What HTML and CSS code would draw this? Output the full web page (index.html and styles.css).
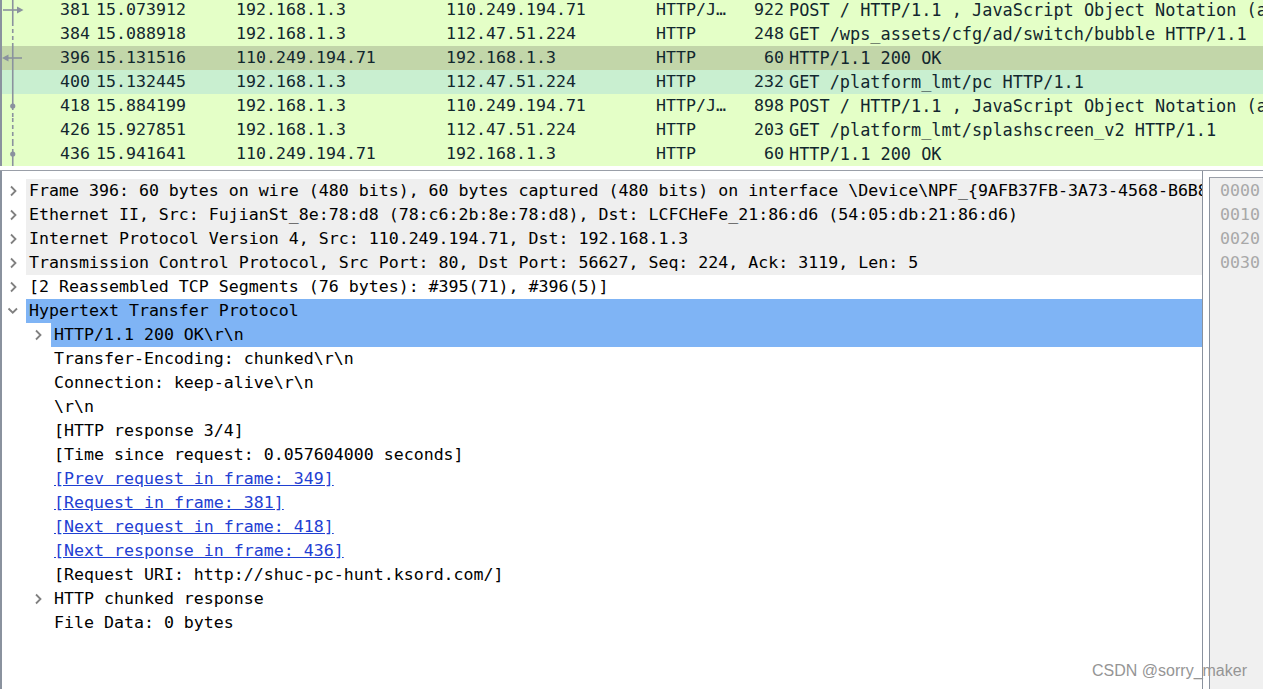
FILE: index.html
```html
<!DOCTYPE html>
<html>
<head>
<meta charset="utf-8">
<title>Wireshark</title>
<link rel="stylesheet" href="styles.css">
</head>
<body>
<div class="app">
  <div class="plist">
    <div class="prow">
      <span class="rel"><svg width="24" height="24" viewBox="0 0 24 24"><line x1="10.75" y1="0" x2="10.75" y2="24" class="ln"/><line x1="1" y1="12" x2="16" y2="12" class="ln"/><polygon points="15,8.5 21.5,12 15,15.5" class="fl"/></svg></span>
      <span class="c-no">381</span><span class="c-time">15.073912</span><span class="c-src">192.168.1.3</span><span class="c-dst">110.249.194.71</span><span class="c-proto">HTTP/J…</span><span class="c-len">922</span><span class="c-info">POST / HTTP/1.1 , JavaScript Object Notation (application/json)</span>
    </div>
    <div class="prow">
      <span class="rel"><svg width="24" height="24" viewBox="0 0 24 24"><line x1="10.75" y1="0" x2="10.75" y2="24" class="ln dash"/></svg></span>
      <span class="c-no">384</span><span class="c-time">15.088918</span><span class="c-src">192.168.1.3</span><span class="c-dst">112.47.51.224</span><span class="c-proto">HTTP</span><span class="c-len">248</span><span class="c-info">GET /wps_assets/cfg/ad/switch/bubble HTTP/1.1</span>
    </div>
    <div class="prow selected">
      <span class="rel"><svg width="24" height="24" viewBox="0 0 24 24"><line x1="10.75" y1="0" x2="10.75" y2="24" class="ln"/><line x1="5" y1="12" x2="20" y2="12" class="ln"/><polygon points="6.5,8.5 0,12 6.5,15.5" class="fl"/></svg></span>
      <span class="c-no">396</span><span class="c-time">15.131516</span><span class="c-src">110.249.194.71</span><span class="c-dst">192.168.1.3</span><span class="c-proto">HTTP</span><span class="c-len">60</span><span class="c-info">HTTP/1.1 200 OK</span>
    </div>
    <div class="prow related">
      <span class="rel"><svg width="24" height="24" viewBox="0 0 24 24"><line x1="10.75" y1="0" x2="10.75" y2="24" class="ln"/></svg></span>
      <span class="c-no">400</span><span class="c-time">15.132445</span><span class="c-src">192.168.1.3</span><span class="c-dst">112.47.51.224</span><span class="c-proto">HTTP</span><span class="c-len">232</span><span class="c-info">GET /platform_lmt/pc HTTP/1.1</span>
    </div>
    <div class="prow">
      <span class="rel"><svg width="24" height="24" viewBox="0 0 24 24"><line x1="10.75" y1="0" x2="10.75" y2="12" class="ln"/><line x1="10.75" y1="12" x2="10.75" y2="24" class="ln dash"/><circle cx="10.75" cy="12" r="2.6" class="fl"/></svg></span>
      <span class="c-no">418</span><span class="c-time">15.884199</span><span class="c-src">192.168.1.3</span><span class="c-dst">110.249.194.71</span><span class="c-proto">HTTP/J…</span><span class="c-len">898</span><span class="c-info">POST / HTTP/1.1 , JavaScript Object Notation (application/json)</span>
    </div>
    <div class="prow">
      <span class="rel"><svg width="24" height="24" viewBox="0 0 24 24"><line x1="10.75" y1="0" x2="10.75" y2="24" class="ln dash"/></svg></span>
      <span class="c-no">426</span><span class="c-time">15.927851</span><span class="c-src">192.168.1.3</span><span class="c-dst">112.47.51.224</span><span class="c-proto">HTTP</span><span class="c-len">203</span><span class="c-info">GET /platform_lmt/splashscreen_v2 HTTP/1.1</span>
    </div>
    <div class="prow">
      <span class="rel"><svg width="24" height="24" viewBox="0 0 24 24"><line x1="10.75" y1="0" x2="10.75" y2="12" class="ln dash"/><line x1="10.75" y1="12" x2="10.75" y2="24" class="ln"/><circle cx="10.75" cy="12" r="2.6" class="fl"/></svg></span>
      <span class="c-no">436</span><span class="c-time">15.941641</span><span class="c-src">110.249.194.71</span><span class="c-dst">192.168.1.3</span><span class="c-proto">HTTP</span><span class="c-len">60</span><span class="c-info">HTTP/1.1 200 OK</span>
    </div>
  </div>
  <div class="split"></div>
  <div class="bottom">
    <div class="tree">
      <div class="trow gray"><span class="tw"><svg width="24" height="24" viewBox="0 0 24 24"><path d="M9 7.5 L13.5 12 L9 16.5" class="chev"/></svg></span><span class="lbl">Frame 396: 60 bytes on wire (480 bits), 60 bytes captured (480 bits) on interface \Device\NPF_{9AFB37FB-3A73-4568-B6B8</span></div>
      <div class="trow gray"><span class="tw"><svg width="24" height="24" viewBox="0 0 24 24"><path d="M9 7.5 L13.5 12 L9 16.5" class="chev"/></svg></span><span class="lbl">Ethernet II, Src: FujianSt_8e:78:d8 (78:c6:2b:8e:78:d8), Dst: LCFCHeFe_21:86:d6 (54:05:db:21:86:d6)</span></div>
      <div class="trow gray"><span class="tw"><svg width="24" height="24" viewBox="0 0 24 24"><path d="M9 7.5 L13.5 12 L9 16.5" class="chev"/></svg></span><span class="lbl">Internet Protocol Version 4, Src: 110.249.194.71, Dst: 192.168.1.3</span></div>
      <div class="trow gray"><span class="tw"><svg width="24" height="24" viewBox="0 0 24 24"><path d="M9 7.5 L13.5 12 L9 16.5" class="chev"/></svg></span><span class="lbl">Transmission Control Protocol, Src Port: 80, Dst Port: 56627, Seq: 224, Ack: 3119, Len: 5</span></div>
      <div class="trow"><span class="tw"><svg width="24" height="24" viewBox="0 0 24 24"><path d="M9 7.5 L13.5 12 L9 16.5" class="chev"/></svg></span><span class="lbl">[2 Reassembled TCP Segments (76 bytes): #395(71), #396(5)]</span></div>
      <div class="trow sel"><span class="tw"><svg width="24" height="24" viewBox="0 0 24 24"><path d="M6.5 9.5 L10.75 13.75 L15 9.5" class="chev"/></svg></span><span class="lbl">Hypertext Transfer Protocol</span></div>
      <div class="trow l1 sel"><span class="tw"><svg width="24" height="24" viewBox="0 0 24 24"><path d="M9 7.5 L13.5 12 L9 16.5" class="chev"/></svg></span><span class="lbl">HTTP/1.1 200 OK\r\n</span></div>
      <div class="trow l1"><span class="tw"></span><span class="lbl">Transfer-Encoding: chunked\r\n</span></div>
      <div class="trow l1"><span class="tw"></span><span class="lbl">Connection: keep-alive\r\n</span></div>
      <div class="trow l1"><span class="tw"></span><span class="lbl">\r\n</span></div>
      <div class="trow l1"><span class="tw"></span><span class="lbl">[HTTP response 3/4]</span></div>
      <div class="trow l1"><span class="tw"></span><span class="lbl">[Time since request: 0.057604000 seconds]</span></div>
      <div class="trow l1"><span class="tw"></span><span class="lbl"><a class="lnk">[Prev request in frame: 349]</a></span></div>
      <div class="trow l1"><span class="tw"></span><span class="lbl"><a class="lnk">[Request in frame: 381]</a></span></div>
      <div class="trow l1"><span class="tw"></span><span class="lbl"><a class="lnk">[Next request in frame: 418]</a></span></div>
      <div class="trow l1"><span class="tw"></span><span class="lbl"><a class="lnk">[Next response in frame: 436]</a></span></div>
      <div class="trow l1"><span class="tw"></span><span class="lbl">[Request URI: http://shuc-pc-hunt.ksord.com/]</span></div>
      <div class="trow l1"><span class="tw"><svg width="24" height="24" viewBox="0 0 24 24"><path d="M9 7.5 L13.5 12 L9 16.5" class="chev"/></svg></span><span class="lbl">HTTP chunked response</span></div>
      <div class="trow l1"><span class="tw"></span><span class="lbl">File Data: 0 bytes</span></div>
    </div>
    <div class="bytes">
      <div class="brow">0000</div>
      <div class="brow">0010</div>
      <div class="brow">0020</div>
      <div class="brow">0030</div>
    </div>
  </div>
  <div class="wm">CSDN @sorry_maker</div>
</div>
</body>
</html>
```

FILE: styles.css
```css
html, body {
  margin: 0;
  padding: 0;
  background: #ffffff;
  overflow: hidden;
}

body {
  font-family: "DejaVu Sans Mono", "Liberation Mono", monospace;
  font-size: 16.6px;
  color: #000000;
}

.app {
  position: relative;
  height: 689px;
  display: flex;
  flex-direction: column;
  overflow: hidden;
}

/* ---------- packet list ---------- */
.plist {
  flex: none;
  margin-top: -2px;
  border-left: 2px solid #8a929e;
}

.prow {
  display: grid;
  grid-template-columns: 24px 64px 146px 210px 210px 84px 44px minmax(0, 1fr);
  height: 24px;
  line-height: 24px;
  background: #e4ffc7;
  color: #12272e;
  white-space: nowrap;
}

.prow.selected { background: #c2d6a9; }
.prow.related { background: #c9efd0; }

.prow > span { overflow: hidden; }

.prow .c-info { font-size: 16.9px; }

.rel svg { display: block; }

.ln {
  stroke: #8a929e;
  stroke-width: 1.6;
  fill: none;
}

.ln.dash { stroke-dasharray: 4 3; }

.fl { fill: #8a929e; }

.c-no, .c-len { text-align: right; }
.c-time { padding-left: 6px; }
.c-info { padding-left: 5px; }

.split {
  flex: none;
  height: 4px;
  border-bottom: 1px solid #9a9fa8;
}

/* ---------- bottom panes ---------- */
.bottom {
  flex: 1;
  min-height: 0;
  display: flex;
}

.tree {
  flex: none;
  width: 1203px;
  box-sizing: border-box;
  border-left: 2px solid #8a929e;
  border-right: 1px solid #8a929e;
  padding-top: 8px;
  overflow: hidden;
}

.trow {
  display: flex;
  height: 24px;
  line-height: 24px;
  white-space: nowrap;
}

.trow.l1 { padding-left: 25px; }

.tw {
  flex: none;
  width: 24px;
  height: 24px;
}

.tw svg { display: block; }

.chev {
  fill: none;
  stroke: #808080;
  stroke-width: 1.8;
}

.lbl {
  flex: 1;
  min-width: 0;
  overflow: hidden;
  padding-left: 3px;
}

.trow.gray .lbl { background: #efefef; }
.trow.sel .lbl { background: #7fb4f5; }

.lnk {
  color: #1f40d2;
  text-decoration: underline;
}

.bytes {
  flex: 1;
  margin-left: 6px;
  margin-top: 6px;
  padding-top: 1px;
  border-left: 1px solid #8a929e;
  border-top: 1px solid #9a9fa8;
  background: #f0f0f0;
  color: #a8a8a8;
  padding-left: 10px;
}

.brow {
  height: 24px;
  line-height: 24px;
}

/* watermark */
.wm {
  position: absolute;
  right: 16px;
  bottom: 10px;
  font-family: "Liberation Sans", Arial, sans-serif;
  font-size: 16px;
  line-height: 16px;
  color: #959595;
}
```
